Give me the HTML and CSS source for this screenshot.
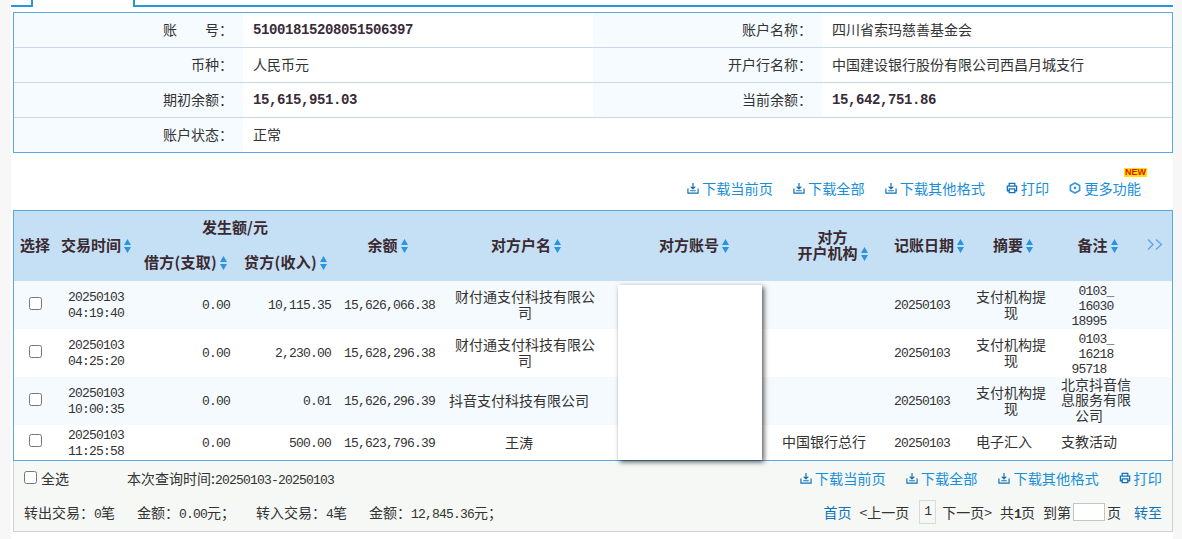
FILE: index.html
```html
<!DOCTYPE html>
<html lang="zh">
<head>
<meta charset="utf-8">
<title>账户明细</title>
<link rel="stylesheet" href="styles.css">
</head>
<body>
<svg class="defs" width="0" height="0" aria-hidden="true">
  <symbol id="sort" viewBox="0 0 7 14"><path d="M3.500 0 7 6H0Z M0 8H7L3.500 14Z"/></symbol>
  <symbol id="dl" viewBox="0 0 13 13"><path d="M1 7V12H12V7M3.500 9.500H9.500M6.500 1V7M4 5 6.500 7.500 9 5" fill="none" stroke="currentColor" stroke-width="1.300"/></symbol>
  <symbol id="pr" viewBox="0 0 13 13"><path d="M3.500 4V1.500H9.500V4M3.500 9.500H1.500V4.500H11.500V9.500H9.500M3.500 7.500H9.500V11.500H3.500Z" fill="none" stroke="currentColor" stroke-width="1.400"/></symbol>
  <symbol id="more" viewBox="0 0 13 13"><path d="M6.500 1 11.500 3.800V9.200L6.500 12 1.500 9.200V3.800Z" fill="none" stroke="currentColor" stroke-width="1.800"/><circle cx="6.500" cy="6.500" r="1.500" fill="currentColor"/></symbol>
  <symbol id="chev" viewBox="0 0 16 11"><path d="M1 .5 6 5.500 1 10.500M9 .5 14.500 5.500 9 10.500" fill="none" stroke="currentColor" stroke-width="1.200"/></symbol>
</svg>
<div class="page">
  <div class="tabs">
    <div class="tab-side tab-left"></div>
    <div class="tab-active"></div>
    <div class="tab-side tab-right"></div>
  </div>

  <div class="info">
    <div class="lb">账<span class="gap"></span>号：</div><div class="val strong">51001815208051506397</div>
    <div class="lb">账户名称：</div><div class="val">四川省索玛慈善基金会</div>
    <div class="lb">币种：</div><div class="val">人民币元</div>
    <div class="lb">开户行名称：</div><div class="val">中国建设银行股份有限公司西昌月城支行</div>
    <div class="lb">期初余额：</div><div class="val strong">15,615,951.03</div>
    <div class="lb">当前余额：</div><div class="val strong">15,642,751.86</div>
    <div class="lb last">账户状态：</div><div class="val last">正常</div>
    <div class="empty last"></div>
  </div>

  <div class="toolbar">
    <a class="tool"><svg class="ic"><use href="#dl"/></svg>下载当前页</a>
    <a class="tool"><svg class="ic"><use href="#dl"/></svg>下载全部</a>
    <a class="tool wide-after"><svg class="ic"><use href="#dl"/></svg>下载其他格式</a>
    <a class="tool"><svg class="ic"><use href="#pr"/></svg>打印</a>
    <a class="tool"><svg class="ic ic-more"><use href="#more"/></svg>更多功能<span class="new">NEW</span></a>
  </div>

  <div class="grid-wrap">
    <table class="grid">
      <colgroup>
        <col class="c1"><col class="c2"><col class="c3"><col class="c4"><col class="c5"><col class="c6">
        <col class="c7"><col class="c8"><col class="c9"><col class="c10"><col class="c11"><col class="c12">
      </colgroup>
      <thead>
        <tr class="h1">
          <th rowspan="2">选择</th>
          <th rowspan="2">交易时间<svg class="sort"><use href="#sort"/></svg></th>
          <th colspan="2" class="th-group">发生额/元</th>
          <th rowspan="2" class="th-bal">余额<svg class="sort"><use href="#sort"/></svg></th>
          <th rowspan="2" class="th-name">对方户名<svg class="sort"><use href="#sort"/></svg></th>
          <th rowspan="2" class="th-acct">对方账号<svg class="sort"><use href="#sort"/></svg></th>
          <th rowspan="2">对方<br>开户机构<svg class="sort"><use href="#sort"/></svg></th>
          <th rowspan="2" class="th-date">记账日期<svg class="sort"><use href="#sort"/></svg></th>
          <th rowspan="2" class="th-sum">摘要<svg class="sort"><use href="#sort"/></svg></th>
          <th rowspan="2">备注<svg class="sort"><use href="#sort"/></svg></th>
          <th rowspan="2" class="chev"><svg class="chev-ic"><use href="#chev"/></svg></th>
        </tr>
        <tr class="h2">
          <th>借方(支取)<svg class="sort"><use href="#sort"/></svg></th>
          <th>贷方(收入)<svg class="sort"><use href="#sort"/></svg></th>
        </tr>
      </thead>
      <tbody>
        <tr class="r tint">
          <td><input type="checkbox" class="cb"></td>
          <td class="n">20250103<br>04:19:40</td>
          <td class="n amt">0.00</td><td class="n amt">10,115.35</td><td class="n amt bal">15,626,066.38</td>
          <td class="name shifted">财付通支付科技有限公司</td><td></td><td></td>
          <td class="n date">20250103</td><td class="sum">支付机构提现</td>
          <td class="n note">0103_<br>16030<br>18995&nbsp;&nbsp;</td><td></td>
        </tr>
        <tr class="r">
          <td><input type="checkbox" class="cb"></td>
          <td class="n">20250103<br>04:25:20</td>
          <td class="n amt">0.00</td><td class="n amt">2,230.00</td><td class="n amt bal">15,628,296.38</td>
          <td class="name shifted">财付通支付科技有限公司</td><td></td><td></td>
          <td class="n date">20250103</td><td class="sum">支付机构提现</td>
          <td class="n note">0103_<br>16218<br>95718&nbsp;&nbsp;</td><td></td>
        </tr>
        <tr class="r tint">
          <td><input type="checkbox" class="cb"></td>
          <td class="n">20250103<br>10:00:35</td>
          <td class="n amt">0.00</td><td class="n amt">0.01</td><td class="n amt bal">15,626,296.39</td>
          <td class="name">抖音支付科技有限公司</td><td></td><td></td>
          <td class="n date">20250103</td><td class="sum">支付机构提现</td>
          <td class="note cjk">北京抖音信<br>息服务有限<br><span class="note-tail">公司</span></td><td></td>
        </tr>
        <tr class="r short">
          <td><input type="checkbox" class="cb"></td>
          <td class="n">20250103<br>11:25:58</td>
          <td class="n amt">0.00</td><td class="n amt">500.00</td><td class="n amt bal">15,623,796.39</td>
          <td class="name">王涛</td><td></td><td class="inst">中国银行总行</td>
          <td class="n date">20250103</td><td class="sum left">电子汇入</td>
          <td class="note left">支教活动</td><td></td>
        </tr>
      </tbody>
    </table>
    <div class="mask"></div>
  </div>

  <div class="foot">
    <div class="foot-row first">
      <label class="all"><input type="checkbox" class="cb"><span>全选</span></label>
      <span class="query">本次查询时间:<span class="n">20250103-20250103</span></span>
      <div class="foot-tools">
        <a class="tool"><svg class="ic"><use href="#dl"/></svg>下载当前页</a>
        <a class="tool wide-after"><svg class="ic"><use href="#dl"/></svg>下载全部</a>
        <a class="tool"><svg class="ic"><use href="#dl"/></svg>下载其他格式</a>
        <a class="tool"><svg class="ic"><use href="#pr"/></svg>打印</a>
      </div>
    </div>
    <div class="foot-row second">
      <div class="stats">
        <span>转出交易：<span class="n">0</span>笔</span>
        <span>金额：<span class="n">0.00</span>元；</span>
        <span class="s3">转入交易：<span class="n">4</span>笔</span>
        <span>金额：<span class="n">12,845.36</span>元；</span>
      </div>
      <div class="pager">
        <a class="plink">首页</a>
        <span>&lt;上一页</span>
        <span class="pnum n">1</span>
        <span>下一页&gt;</span>
        <span>共<b class="pbold">1</b>页</span>
        <span class="goto">到第<span class="pinput"></span>页</span>
        <a class="plink plast">转至</a>
      </div>
    </div>
  </div>
</div>
</body>
</html>
```

FILE: styles.css
```css
* { box-sizing: border-box; }
html, body { margin: 0; padding: 0; }
body {
  background: #f7f7f7;
  font-family: "Noto Sans CJK SC", "Liberation Sans", sans-serif;
  font-size: 14px;
  color: #333;
  overflow: hidden;
}
.defs { position: absolute; }
.page {
  width: 1162px;
  height: 539px;
  margin-left: 11px;
  background: #fff;
  padding-left: 2px;
}
.tabs {
  display: flex;
  height: 12px;
  margin-left: -2px;
}
.tab-side {
  height: 7px;
  border-bottom: 2px solid #2a95dc;
}
.tab-left { width: 22px; border-right: 2px solid #2a95dc; }
.tab-active { width: 100px; }
.tab-right { flex: 1; border-left: 2px solid #2a95dc; }

.info {
  display: grid;
  grid-template-columns: 229px 350px 229px 1fr;
  grid-template-rows: 35px 35px 35px 34px;
  width: 1160px;
  height: 141px;
  border: 1px solid #5aa8e3;
}
.lb, .val, .empty {
  display: flex;
  align-items: center;
  border-bottom: 1px solid #c6d8ea;
  line-height: 16px;
  padding-bottom: 2px;
}
.lb {
  justify-content: flex-end;
  padding-right: 10px;
  background: #f6fbff;
}
.val { padding-left: 10px; background: #fff; }
.last { border-bottom: 0; }
.gap { display: inline-block; width: 28px; }
.strong {
  font-family: "Liberation Mono", monospace;
  font-weight: 700;
  font-size: 14px;
  letter-spacing: -.4px;
  color: #3a2a3a;
  padding-bottom: 0;
}

.toolbar {
  display: flex;
  justify-content: flex-end;
  align-items: center;
  gap: 20px;
  height: 57px;
  padding: 13px 32px 0 0;
}
.tool {
  position: relative;
  display: inline-flex;
  align-items: center;
  gap: 3px;
  color: #1a8fd8;
  font-size: 14.2px;
  white-space: nowrap;
}
.wide-after { margin-right: 1px; }
.ic { width: 12px; height: 12px; color: #1272b8; flex: none; }
.ic-more { color: #3a98d8; }
.new {
  position: absolute;
  top: -10px;
  right: -6px;
  padding: 0 1px;
  background: #ffe000;
  color: #e01010;
  font-family: "Liberation Sans", sans-serif;
  font-size: 9px;
  font-weight: 700;
  line-height: 9px;
}

.grid-wrap {
  position: relative;
  width: 1160px;
  height: 251px;
  border: 1px solid #5aa8e3;
}
.grid {
  width: 100%;
  border-collapse: collapse;
  table-layout: fixed;
}
.c1 { width: 42px; } .c2 { width: 80px; } .c3 { width: 99px; } .c4 { width: 101px; }
.c5 { width: 107px; } .c6 { width: 157px; } .c7 { width: 180px; } .c8 { width: 105px; }
.c9 { width: 80px; } .c10 { width: 90px; } .c11 { width: 85px; } .c12 { width: 32px; }
.grid th {
  padding: 0 0 3px;
  background: #c5dff5;
  font-size: 15px;
  font-weight: 700;
  color: #3a2a30;
  line-height: 16px;
  white-space: nowrap;
}
.grid th.th-group { padding-right: 2px; }
.grid th.th-bal { padding-right: 4px; }
.grid th.th-name { padding-left: 9px; }
.grid th.th-acct { padding-left: 8px; }
.grid th.th-date { padding-left: 9px; text-align: left; }
.grid th.th-sum { padding-left: 6px; }
.h1 { height: 35px; }
.h2 { height: 35px; }
.h2 th { letter-spacing: .3px; }
.sort { width: 7px; height: 14px; margin-left: 3px; fill: #2a95dc; vertical-align: -2px; }
.chev-ic { width: 16px; height: 11px; color: #5aa0e0; display: block; margin-left: 7px; }
.grid td {
  padding: 0;
  text-align: center;
  vertical-align: middle;
  line-height: 16px;
}
.r { height: 48px; }
.short { height: 35px; }
.tint td { background: #f5fafe; }
.n {
  font-family: "Liberation Mono", monospace;
  font-size: 13px;
  letter-spacing: -.8px;
}
.grid td.n { padding-top: 2px; }
.grid td.amt { text-align: right; padding-right: 5px; }
.grid td.bal { padding-right: 8px; }
.grid td.name { padding: 0 11px 2px 6px; }
.grid td.shifted { padding: 0 5px 2px 12px; }
.grid td.inst { text-align: left; padding: 0 0 4px 2px; }
.grid td.date { padding-right: 6px; }
.grid td.sum { padding: 0 9px 2px 11px; }
.grid td.sum.left { text-align: left; padding-bottom: 4px; }
.grid td.note { padding-right: 3px; white-space: nowrap; }
.grid td.n.note { line-height: 15px; padding-top: 3px; }
.grid td.note.cjk { line-height: 15.33px; padding-bottom: 2px; }
.grid td.note.left { text-align: left; padding: 0 0 4px 6px; }
.note-tail { margin-right: 14px; }
.grid td .cb { display: block; margin: 0 auto 4px; }
.cb {
  width: 13px;
  height: 13px;
  margin: 0;
}
.mask {
  position: absolute;
  left: 604px;
  top: 74px;
  width: 144px;
  height: 175px;
  background: #fff;
  box-shadow: 2px 2px 5px rgba(0, 0, 0, .65);
}

.foot {
  width: 1160px;
  height: 71px;
  background: #f5f8f4;
  border: 1px solid #cfd3cf;
  border-top: 0;
  padding: 0 10px;
}
.foot-row {
  display: flex;
  align-items: center;
}
.first { height: 33px; }
.second { height: 35px; justify-content: space-between; }
.all { display: inline-flex; align-items: center; gap: 4px; }
.query { margin-left: 58px; }
.foot-tools {
  display: flex;
  gap: 20px;
  margin-left: auto;
}
.stats { display: flex; gap: 22px; }
.stats .s3 { margin-left: -1px; }
.pager { display: flex; align-items: center; gap: 8px; }
.plink { color: #1272b8; }
.plast { margin-left: 5px; }
.pnum {
  display: inline-block;
  width: 17px;
  height: 24px;
  margin: 0 -2px 0 2px;
  line-height: 22px;
  text-align: center;
  border: 1px solid #d8dcd8;
  background: #f7f7f5;
}
.pbold { font-family: "Liberation Mono", monospace; font-size: 13px; letter-spacing: -.8px; }
.goto { display: inline-flex; align-items: center; gap: 2px; }
.pinput {
  display: inline-block;
  width: 32px;
  height: 18px;
  background: #fff;
  border: 1px solid #c4c4c4;
}
```
